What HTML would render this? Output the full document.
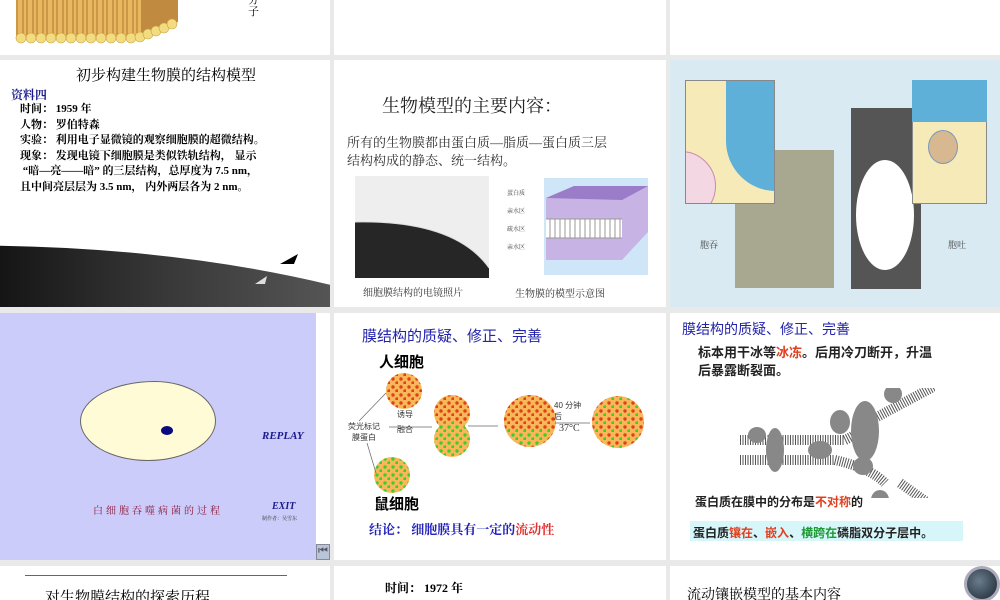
<!DOCTYPE html>
<html><head><meta charset="utf-8"><style>
*{margin:0;padding:0;box-sizing:border-box}
body{width:1000px;height:600px;overflow:hidden;background:#e9e9e9;position:relative;font-family:"Liberation Serif","Noto Serif CJK SC",serif}
.s{position:absolute;background:#fff;overflow:hidden}
.a{position:absolute;white-space:nowrap}
.sans{font-family:"Liberation Sans","Noto Sans CJK SC",sans-serif}
</style></head><body>
<svg width="0" height="0" style="position:absolute"><defs>
<pattern id="pr" width="8" height="8" patternUnits="userSpaceOnUse"><circle cx="3" cy="3" r="1.7" fill="#e0401a"/><circle cx="7" cy="7" r="1.7" fill="#e0401a"/></pattern>
<pattern id="pg" width="8" height="8" patternUnits="userSpaceOnUse"><circle cx="3" cy="3" r="1.7" fill="#3ccf2a"/><circle cx="7" cy="7" r="1.7" fill="#3ccf2a"/></pattern>
<pattern id="pm" width="8" height="8" patternUnits="userSpaceOnUse"><circle cx="3" cy="3" r="1.7" fill="#e0401a"/><circle cx="7" cy="7" r="1.7" fill="#3ccf2a"/></pattern>
<pattern id="lip" width="10" height="10" patternUnits="userSpaceOnUse"><rect width="10" height="10" fill="#e8b860"/><line x1="3" y1="0" x2="3" y2="10" stroke="#b07830" stroke-width="1"/><line x1="7" y1="0" x2="7" y2="10" stroke="#b07830" stroke-width="1"/></pattern>
</defs></svg>

<div class="s" style="left:0;top:0;width:330px;height:55px">
<svg width="330" height="55" style="position:absolute;left:0;top:0">
<rect x="16" y="0" width="125" height="36" fill="url(#lip)"/>
<polygon points="141,0 178,0 178,22 141,36" fill="#c08a40"/>
<g fill="#f3dc80" stroke="#c8a040" stroke-width=".6">
<circle cx="21" cy="38" r="5"/><circle cx="31" cy="38" r="5"/><circle cx="41" cy="38" r="5"/><circle cx="51" cy="38" r="5"/><circle cx="61" cy="38" r="5"/><circle cx="71" cy="38" r="5"/><circle cx="81" cy="38" r="5"/><circle cx="91" cy="38" r="5"/><circle cx="101" cy="38" r="5"/><circle cx="111" cy="38" r="5"/><circle cx="121" cy="38" r="5"/><circle cx="131" cy="38" r="5"/><circle cx="140" cy="37" r="5"/><circle cx="148" cy="34" r="5"/><circle cx="156" cy="31" r="5"/><circle cx="164" cy="28" r="5"/><circle cx="172" cy="24" r="5"/>
</g></svg>
<div class="a" style="left:248px;top:-6px;font-size:11px;line-height:12px">分<br>子</div>
</div>
<div class="s" style="left:334px;top:0;width:332px;height:55px"></div>
<div class="s" style="left:670px;top:0;width:330px;height:55px"></div>

<div class="s" style="left:0;top:60px;width:330px;height:247px">
<div class="a" style="left:76px;top:4px;font-size:15px">初步构建生物膜的结构模型</div>
<div class="a" style="left:11px;top:26px;font-size:12px;font-weight:bold;color:#1a1a8e">资料四</div>
<div class="a" style="left:20px;top:42px;font-size:11px;line-height:15.5px;font-weight:bold">时间： 1959 年<br>人物： 罗伯特森<br>实验： 利用电子显微镜的观察细胞膜的超微结构。<br>现象： 发现电镜下细胞膜是类似铁轨结构， 显示<br>&nbsp;“暗—亮——暗” 的三层结构，总厚度为 7.5 nm，<br>且中间亮层层为 3.5 nm， 内外两层各为 2 nm。</div>
<svg width="330" height="65" style="position:absolute;left:0;top:182px">
<defs><linearGradient id="em" x1="0" x2="1"><stop offset="0" stop-color="#151515"/><stop offset=".5" stop-color="#383838"/><stop offset="1" stop-color="#555"/></linearGradient></defs>
<path d="M0,65 L0,3 Q180,6 330,42 L330,65Z" fill="url(#em)"/>
<path d="M0,3 Q180,6 330,42" stroke="#fff" stroke-width="1.5" fill="none"/>
<path d="M280,22 l18,-10 -4,10z" fill="#000"/>
<path d="M255,42 l12,-8 -2,8z" fill="#ddd"/>
</svg>
</div>

<div class="s" style="left:334px;top:60px;width:332px;height:247px">
<div class="a" style="left:48px;top:32px;font-size:18px;color:#222">生物模型的主要内容：</div>
<div class="a" style="left:13px;top:74px;font-size:13px;line-height:18px;color:#333">所有的生物膜都由蛋白质—脂质—蛋白质三层<br>结构构成的静态、统一结构。</div>
<div style="position:absolute;left:21px;top:116px;width:134px;height:102px;background:#eee"></div>
<svg width="134" height="60" style="position:absolute;left:21px;top:158px"><path d="M0,4 Q100,2 134,50 L134,60 L0,60Z" fill="#262626"/><path d="M0,4 Q100,2 134,50" stroke="#ddd" fill="none"/></svg>
<div class="a" style="left:29px;top:224px;font-size:10px;color:#333">细胞膜结构的电镜照片</div>
<div style="position:absolute;left:210px;top:118px;width:104px;height:97px;background:#cfe5f8"></div>
<svg width="110" height="90" style="position:absolute;left:210px;top:122px">
<path d="M2,16 L30,4 L104,4 L104,50 L78,78 L2,78Z" fill="#c8b4e4"/>
<path d="M2,16 L30,4 L104,4 L78,18Z" fill="#9a7cc8"/>
<rect x="2" y="37" width="76" height="19" fill="#fff"/>
<g stroke="#999"><line x1="2" y1="37" x2="78" y2="37"/><line x1="2" y1="56" x2="78" y2="56"/><path d="M6,37v19M11,37v19M16,37v19M21,37v19M26,37v19M31,37v19M36,37v19M41,37v19M46,37v19M51,37v19M56,37v19M61,37v19M66,37v19M71,37v19M76,37v19"/></g>
</svg>
<div class="a" style="left:173px;top:125px;font-size:6px;line-height:18px;color:#333">蛋白质<br>亲水区<br>疏水区<br>亲水区</div>
<div class="a" style="left:181px;top:225px;font-size:10px;color:#333">生物膜的模型示意图</div>
</div>

<div class="s" style="left:670px;top:60px;width:330px;height:247px;background:#d9eaf3">
<div style="position:absolute;left:65px;top:90px;width:99px;height:138px;background:#a8a890"></div>
<div style="position:absolute;left:15px;top:20px;width:90px;height:124px;background:#f6eab8;border:1px solid #888;overflow:hidden"><div style="position:absolute;left:40px;top:-10px;width:60px;height:120px;background:#5fb0d8;border-radius:0 0 0 50px"></div><div style="position:absolute;left:-40px;top:70px;width:70px;height:70px;border-radius:50%;background:#f3d8e4;border:1px solid #c8a"></div></div>
<div style="position:absolute;left:181px;top:48px;width:70px;height:181px;background:#555"></div>
<div style="position:absolute;left:186px;top:100px;width:58px;height:110px;background:#fff;border-radius:50%"></div>
<div style="position:absolute;left:242px;top:20px;width:75px;height:124px;background:#f6eab8;border:1px solid #888"></div>
<div style="position:absolute;left:242px;top:20px;width:75px;height:42px;background:#5fb0d8"></div>
<div style="position:absolute;left:258px;top:70px;width:30px;height:34px;border-radius:50%;background:#d8b890;border:1px solid #79b"></div>
<div class="a" style="left:30px;top:178px;font-size:9px;color:#444">胞吞</div>
<div class="a" style="left:278px;top:178px;font-size:9px;color:#444">胞吐</div>
</div>

<div class="s" style="left:0;top:313px;width:330px;height:247px;background:#fff">
<div style="position:absolute;left:0;top:0;width:316px;height:247px;background:#ccccfa"></div>
<div style="position:absolute;left:80px;top:68px;width:136px;height:80px;background:#fffbd6;border:1px solid #666;border-radius:55% 45% 50% 50%/50% 50% 50% 50%"></div>
<div style="position:absolute;left:161px;top:113px;width:12px;height:9px;background:#0a0a80;border-radius:50%"></div>
<div class="a" style="left:262px;top:117px;font-size:11px;font-style:italic;font-weight:bold;color:#1a1a8e">REPLAY</div>
<div class="a" style="left:93px;top:189px;font-size:10px;letter-spacing:3px;color:#8a1a3a">白细胞吞噬病菌的过程</div>
<div class="a" style="left:272px;top:188px;font-size:10px;font-style:italic;font-weight:bold;color:#1a1a8e">EXIT</div>
<div class="a" style="left:262px;top:202px;font-size:5px;color:#333">制作者：吴雪东</div>
<div style="position:absolute;left:316px;top:231px;width:14px;height:16px;background:#b8c4d8;border:1px solid #889"></div>
<div class="a" style="left:318px;top:232px;font-size:11px;color:#556">⏮</div>
</div>

<div class="s" style="left:334px;top:313px;width:332px;height:247px">
<div class="a sans" style="left:28px;top:12px;font-size:15px;color:#2222aa">膜结构的质疑、修正、完善</div>
<div class="a sans" style="left:45px;top:38px;font-size:15px;font-weight:bold">人细胞</div>
<div class="a sans" style="left:40px;top:180px;font-size:15px;font-weight:bold">鼠细胞</div>
<svg width="332" height="140" style="position:absolute;left:0;top:55px">
<circle cx="70" cy="23" r="18" fill="#f8b85a"/><circle cx="70" cy="23" r="18" fill="url(#pr)"/>
<circle cx="58" cy="107" r="18" fill="#f8b85a"/><circle cx="58" cy="107" r="18" fill="url(#pg)"/>
<circle cx="118" cy="45" r="18" fill="#f8b85a"/><circle cx="118" cy="45" r="18" fill="url(#pr)"/>
<circle cx="118" cy="71" r="18" fill="#f8b85a"/><circle cx="118" cy="71" r="18" fill="url(#pg)"/>
<circle cx="196" cy="53" r="26" fill="#f8b85a"/><circle cx="196" cy="53" r="26" fill="url(#pr)"/>
<path d="M172,62 A26,26 0 0 0 220,62Z" fill="#f8b85a"/><path d="M172,62 A26,26 0 0 0 220,62Z" fill="url(#pg)"/>
<circle cx="284" cy="54" r="26" fill="#f8b85a"/><circle cx="284" cy="54" r="26" fill="url(#pm)"/>
<g stroke="#666" stroke-width=".7" fill="none"><path d="M25,53 L52,25"/><path d="M33,75 L42,105"/><path d="M55,59 L98,59"/><path d="M134,58 L164,58"/><path d="M222,55 L256,55"/></g>
</svg>
<div class="a sans" style="left:14px;top:108px;font-size:8px;line-height:11px;color:#333;text-align:center">荧光标记<br>膜蛋白</div>
<div class="a sans" style="left:63px;top:96px;font-size:8px;color:#333">诱导</div>
<div class="a sans" style="left:63px;top:111px;font-size:8px;color:#333">融合</div>
<div class="a sans" style="left:220px;top:87px;font-size:8px;color:#333">40 分钟<br>后</div>
<div class="a" style="left:225px;top:110px;font-size:10px;color:#333">37°C</div>
<div class="a" style="left:35px;top:206px;font-size:13px;font-weight:bold;color:#2222bb">结论： 细胞膜具有一定的<span style="color:#e03030">流动性</span></div>
</div>

<div class="s" style="left:670px;top:313px;width:330px;height:247px">
<div class="a sans" style="left:12px;top:6px;font-size:14px;color:#2222aa">膜结构的质疑、修正、完善</div>
<div class="a sans" style="left:28px;top:31px;font-size:13px;line-height:18px;font-weight:bold;color:#222">标本用干冰等<span style="color:#e04020">冰冻</span>。后用冷刀断开，升温<br>后暴露断裂面。</div>
<svg width="200" height="110" style="position:absolute;left:65px;top:75px">
<g fill="none" stroke="#555" stroke-width="10" stroke-dasharray="1 1.5">
<path d="M5,52 L110,52 Q125,45 140,30 L200,-2"/>
<path d="M5,72 L100,72 Q135,80 150,95"/>
<path d="M165,95 L200,120"/>
</g>
<g fill="#888"><ellipse cx="22" cy="47" rx="9" ry="8"/><ellipse cx="40" cy="62" rx="9" ry="22"/><ellipse cx="85" cy="62" rx="12" ry="9"/><ellipse cx="105" cy="34" rx="10" ry="12"/><ellipse cx="130" cy="43" rx="14" ry="30"/><ellipse cx="128" cy="78" rx="10" ry="9"/><ellipse cx="158" cy="6" rx="9" ry="9"/><ellipse cx="145" cy="112" rx="9" ry="10"/></g>
</svg>
<div class="a sans" style="left:25px;top:180px;font-size:12px;font-weight:bold;color:#222">蛋白质在膜中的分布是<span style="color:#e04020">不对称</span>的</div>
<div style="position:absolute;left:20px;top:208px;width:273px;height:20px;background:#d6f6fa"></div>
<div class="a sans" style="left:23px;top:211px;font-size:12px;font-weight:bold;color:#222">蛋白质<span style="color:#e04020">镶在</span>、<span style="color:#e04020">嵌入</span>、<span style="color:#1a9a30">横跨在</span>磷脂双分子层中。</div>
</div>

<div class="s" style="left:0;top:566px;width:330px;height:34px">
<div style="position:absolute;left:25px;top:9px;width:262px;height:1px;background:#666"></div>
<div class="a" style="left:45px;top:20px;font-size:15px">对生物膜结构的探索历程</div>
</div>
<div class="s" style="left:334px;top:566px;width:332px;height:34px">
<div class="a" style="left:51px;top:13px;font-size:12px;font-weight:bold">时间： 1972 年</div>
</div>
<div class="s" style="left:670px;top:566px;width:330px;height:34px">
<div class="a" style="left:17px;top:18px;font-size:14px">流动镶嵌模型的基本内容</div>
<div style="position:absolute;left:294px;top:0;width:36px;height:36px;border-radius:50%;background:radial-gradient(circle at 40% 40%,#6a7c8c,#1c2630);border:3px solid #aab"></div>
</div>
</body></html>
